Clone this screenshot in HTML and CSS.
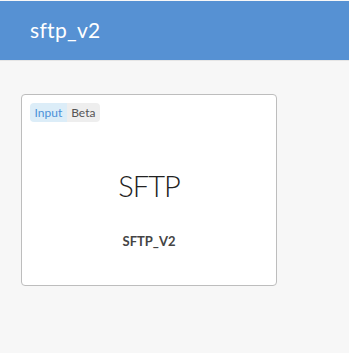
FILE: index.html
```html
<!DOCTYPE html>
<html lang="en">
<head>
    <meta charset="UTF-8">
    <meta name="viewport" content="width=device-width, initial-scale=1.0">
    <title>sftp_v2</title>
    <link rel="stylesheet" href="styles.css">
</head>
<body>
    <div class="header">
        <h1>sftp_v2</h1>
    </div>

    <div class="content">
        <div class="connector-card">
            <div class="tags">
                <span class="tag tag-input">Input</span><span class="tag tag-beta">Beta</span>
            </div>
            <div class="logo">SFTP</div>
            <div class="connector-name">SFTP_V2</div>
        </div>
    </div>
</body>
</html>
```

FILE: styles.css
```css
body {
    font-family: Lato, "Noto Sans", sans-serif;
    background-color: #f7f7f7;
    margin: 0;
    height: 100vh;
    overflow: hidden;
}

.header {
    background-color: #5691d3;
    height: 59px;
    margin-top: 1px;
    border-bottom: 1px solid #e6e6e6;
    display: flex;
    align-items: center;
    padding-left: 30px;
}

.header h1 {
    margin: 0;
    color: #ffffff;
    font-size: 21px;
    font-weight: 400;
    letter-spacing: 0.3px;
    padding-bottom: 2px;
}

.content {
    padding: 33px 0 0 21px;
}

.connector-card {
    width: 256px;
    height: 192px;
    background-color: #ffffff;
    border: 1px solid #bdbdbd;
    border-radius: 4px;
    box-sizing: border-box;
    padding: 8px;
    text-align: center;
}

.tags {
    display: flex;
}

.tag {
    font-size: 12px;
    line-height: 19px;
    padding: 0 4.5px;
}

.tag-input {
    background-color: #dcedf8;
    color: #4a90d9;
    border-radius: 4px 0 0 4px;
}

.tag-beta {
    background-color: #eeeeee;
    color: #555555;
    border-radius: 0 4px 4px 0;
}

.logo {
    margin-top: 46px;
    font-size: 29px;
    font-weight: 300;
    color: #222222;
    letter-spacing: -1px;
}

.connector-name {
    margin-top: 30px;
    font-size: 13px;
    font-weight: 700;
    color: #444444;
}
```
